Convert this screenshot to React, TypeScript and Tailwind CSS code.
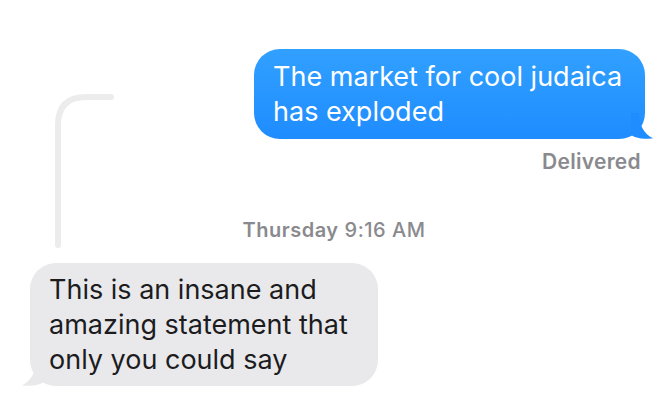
import React from "react";

export default function App() {
  return (
    <div
      className="relative w-[668px] h-[420px] overflow-hidden bg-white"
      style={{ fontFamily: "Inter, 'Noto Sans', 'Liberation Sans', sans-serif" }}
    >
      {/* reply thread line */}
      <svg
        className="absolute left-0 top-0"
        width="140"
        height="260"
        viewBox="0 0 140 260"
        fill="none"
      >
        <path
          d="M58 245 V125 Q58 97 86 97 H111"
          stroke="#ececed"
          strokeWidth="6"
          strokeLinecap="round"
          fill="none"
        />
      </svg>

      <div className="flex flex-col pt-[49px]">
        {/* sent bubble */}
        <div className="flex justify-end pr-[23px]">
          <div className="relative">
            <div className="w-[391px] rounded-[26px] bg-gradient-to-b from-[#31a0ff] to-[#1f8cff] pl-[19px] pr-[10px] py-[10px] text-[27px] leading-[35px] text-white">
              The market for cool judaica
              <br />
              has exploded
            </div>
            <svg
              className="absolute right-[-10px] bottom-0"
              width="24"
              height="26"
              viewBox="0 0 24 26"
            >
              <path
                d="M0 0 H8 C8 12 13 21 22 25.2 Q16 26 10 25.6 Q4 25 0 22 Z"
                fill="#1f8cff"
              />
            </svg>
          </div>
        </div>

        {/* delivered */}
        <div className="flex justify-end pr-[27px] mt-[10px]">
          <span className="text-[21px] leading-[26px] font-semibold text-[#8a8a8e] tracking-[0.3px]">
            Delivered
          </span>
        </div>

        {/* timestamp */}
        <div className="flex justify-center mt-[42px] text-[20px] leading-[26px] text-[#8a8a8e] tracking-[0.5px]">
          <span className="font-semibold">Thursday</span>
          <span className="ml-[6px] font-medium">9:16 AM</span>
        </div>

        {/* received bubble */}
        <div className="flex pl-[30px] mt-[20px]">
          <div className="relative">
            <div className="w-[348px] rounded-[26px] bg-[#e9e9eb] pl-[19px] pr-[6px] py-[9px] text-[27px] leading-[35px] text-[#1c1c1e]">
              This is an insane and
              <br />
              amazing statement that
              <br />
              only you could say
            </div>
            <svg
              className="absolute left-[-10px] bottom-0"
              width="24"
              height="26"
              viewBox="0 0 24 26"
            >
              <path
                d="M24 0 H16 C16 12 11 21 2 25.2 Q8 26 14 25.6 Q20 25 24 22 Z"
                fill="#e9e9eb"
              />
            </svg>
          </div>
        </div>
      </div>
    </div>
  );
}
